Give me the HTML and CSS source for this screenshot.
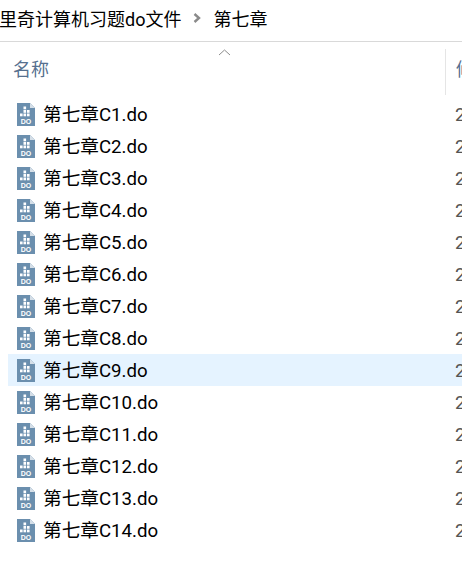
FILE: index.html
```html
<!DOCTYPE html>
<html>

<head>
    <title>第七章</title>
    <meta charset="utf-8">
    <link rel="stylesheet" href="styles.css">
</head>

<body>
    <svg class="sprite" width="0" height="0">
        <symbol id="doIcon" viewBox="0 0 18 23">
            <path d="M0 0H13L18 5V23H0Z" fill="#6b8fae" />
            <path d="M13 0L18 5H13Z" fill="#d5dfe8" />
            <g fill="#fff">
                <rect x="6.5" y="3.5" width="2.6" height="2.8" />
                <rect x="6.5" y="7" width="2.6" height="2.8" />
                <rect x="10" y="7" width="2.6" height="2.8" />
                <rect x="3" y="10.5" width="2.6" height="2.8" />
                <rect x="6.5" y="10.5" width="2.6" height="2.8" />
                <rect x="10" y="10.5" width="2.6" height="2.8" />
            </g>
            <text x="9" y="21" class="icon-label">DO</text>
        </symbol>
    </svg>

    <div class="breadcrumb">
        <span>里奇计算机习题do文件</span>
        <svg class="crumb-arrow" width="8" height="10" viewBox="0 0 8 10">
            <path d="M1.5 1L6 5L1.5 9" fill="none" stroke="#8a8a8a" stroke-width="2.4" />
        </svg>
        <span>第七章</span>
    </div>

    <div class="columns">
        <svg class="sort-arrow" width="13" height="7" viewBox="0 0 13 7">
            <path d="M1 6L6.5 1L12 6" fill="none" stroke="#8c8c8c" stroke-width="1" />
        </svg>
        <div class="col-name">名称</div>
        <div class="col-date">修改日期</div>
    </div>

    <div class="file-list">
        <div class="file-row"><svg class="file-icon"><use href="#doIcon" /></svg><span class="file-name">第七章C1.do</span><span class="file-date">2</span></div>
        <div class="file-row"><svg class="file-icon"><use href="#doIcon" /></svg><span class="file-name">第七章C2.do</span><span class="file-date">2</span></div>
        <div class="file-row"><svg class="file-icon"><use href="#doIcon" /></svg><span class="file-name">第七章C3.do</span><span class="file-date">2</span></div>
        <div class="file-row"><svg class="file-icon"><use href="#doIcon" /></svg><span class="file-name">第七章C4.do</span><span class="file-date">2</span></div>
        <div class="file-row"><svg class="file-icon"><use href="#doIcon" /></svg><span class="file-name">第七章C5.do</span><span class="file-date">2</span></div>
        <div class="file-row"><svg class="file-icon"><use href="#doIcon" /></svg><span class="file-name">第七章C6.do</span><span class="file-date">2</span></div>
        <div class="file-row"><svg class="file-icon"><use href="#doIcon" /></svg><span class="file-name">第七章C7.do</span><span class="file-date">2</span></div>
        <div class="file-row"><svg class="file-icon"><use href="#doIcon" /></svg><span class="file-name">第七章C8.do</span><span class="file-date">2</span></div>
        <div class="file-row selected"><svg class="file-icon"><use href="#doIcon" /></svg><span class="file-name">第七章C9.do</span><span class="file-date">2</span></div>
        <div class="file-row"><svg class="file-icon"><use href="#doIcon" /></svg><span class="file-name">第七章C10.do</span><span class="file-date">2</span></div>
        <div class="file-row"><svg class="file-icon"><use href="#doIcon" /></svg><span class="file-name">第七章C11.do</span><span class="file-date">2</span></div>
        <div class="file-row"><svg class="file-icon"><use href="#doIcon" /></svg><span class="file-name">第七章C12.do</span><span class="file-date">2</span></div>
        <div class="file-row"><svg class="file-icon"><use href="#doIcon" /></svg><span class="file-name">第七章C13.do</span><span class="file-date">2</span></div>
        <div class="file-row"><svg class="file-icon"><use href="#doIcon" /></svg><span class="file-name">第七章C14.do</span><span class="file-date">2</span></div>
    </div>
</body>

</html>
```

FILE: styles.css
```css
html,
body {
    height: 100%;
    overflow: hidden;
}

body {
    margin: 0;
    background-color: #fff;
    color: #000;
    font-family: Roboto, "Noto Sans CJK SC", sans-serif;
    font-size: 18.67px;
}

.sprite {
    display: block;
}

.icon-label {
    fill: #fff;
    font-family: "Liberation Sans", sans-serif;
    font-size: 7px;
    font-weight: 700;
    text-anchor: middle;
}

.breadcrumb {
    display: flex;
    align-items: center;
    gap: 12px;
    height: 42px;
    margin-left: -1px;
    padding-bottom: 5px;
    box-sizing: border-box;
    border-bottom: 1px solid #d9d9d9;
    font-size: 18px;
    white-space: nowrap;
}

.columns {
    position: relative;
    display: flex;
    height: 56px;
    padding-top: 7px;
    box-sizing: border-box;
    color: #56708f;
    font-size: 18px;
}

.sort-arrow {
    position: absolute;
    left: 218px;
    top: 7px;
}

.col-name {
    flex: none;
    width: 445px;
    height: 40px;
    box-sizing: border-box;
    padding: 6px 0 0 13px;
}

.col-date {
    flex: 1;
    min-width: 0;
    height: 40px;
    padding: 6px 0 0 10px;
    border-left: 1px solid #e5e5e5;
    overflow: hidden;
    white-space: nowrap;
}

.file-list {
    padding-left: 8px;
}

.file-row {
    display: flex;
    align-items: center;
    height: 32px;
    line-height: 30px;
    white-space: nowrap;
}

.file-row.selected {
    background-color: #e5f3ff;
}

.file-icon {
    flex: none;
    width: 18px;
    height: 23px;
    margin: 0 8px 0 9px;
}

.file-name {
    width: 412px;
    flex: none;
    padding-top: 2px;
}

.file-date {
    padding-top: 2px;
    color: #555;
}
```
